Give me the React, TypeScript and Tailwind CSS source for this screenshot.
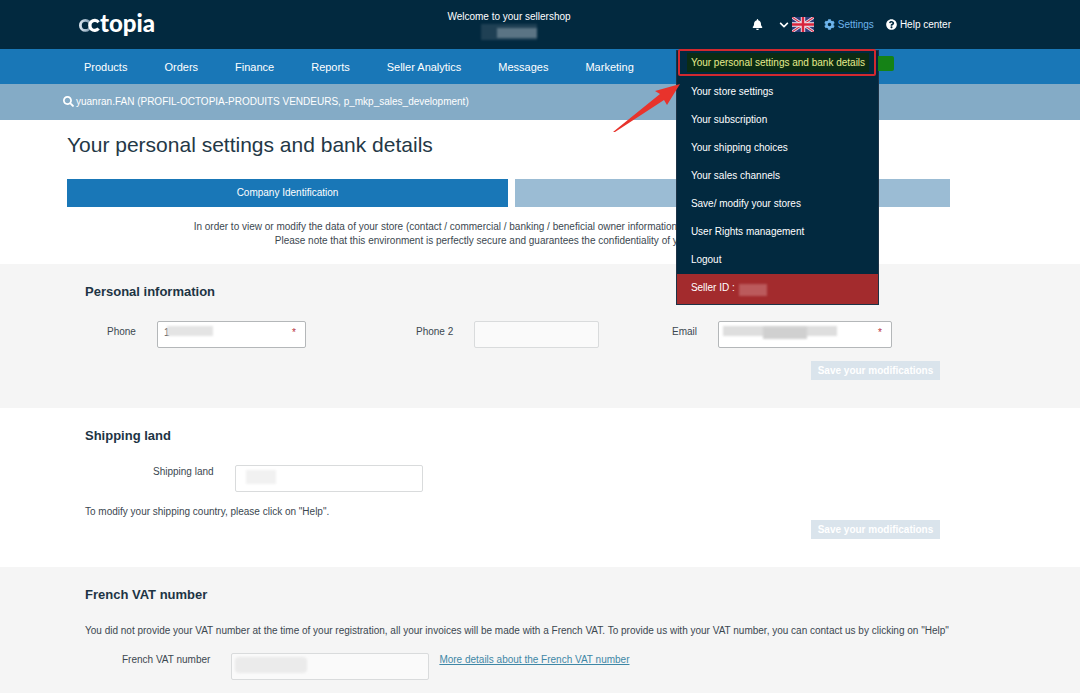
import { ReactNode } from 'react';
import { FaBell, FaChevronDown, FaCog, FaQuestionCircle, FaSearch } from 'react-icons/fa';

const NAV_ITEMS = ['Products', 'Orders', 'Finance', 'Reports', 'Seller Analytics', 'Messages', 'Marketing'];

const MENU_ITEMS = [
    'Your store settings',
    'Your subscription',
    'Your shipping choices',
    'Your sales channels',
    'Save/ modify your stores',
    'User Rights management',
    'Logout',
];

function Logo() {
    return (
        <svg width="88" height="38" viewBox="0 0 88 38" className="ml-[11px]" role="img" aria-label="octopia">
            <defs>
                <linearGradient id="logo-o" x1="0" y1="0" x2="1" y2="0">
                    <stop offset="0" stopColor="#d5e0ea" />
                    <stop offset="0.6" stopColor="#9fb6c8" />
                    <stop offset="1" stopColor="#6d889c" />
                </linearGradient>
            </defs>
            <circle cx="7.4" cy="19.4" r="5" fill="none" stroke="url(#logo-o)" strokeWidth="2.8" />
            <path d="M20.6 16.2a5 5 0 1 0 0 6.4" fill="none" stroke="#fff" strokeWidth="3.2" />
            <text x="22" y="26" fill="#fff" fontFamily="Lato, sans-serif" fontWeight="900" fontSize="24">
                topia
            </text>
        </svg>
    );
}

function UkFlag() {
    return (
        <svg width="22" height="15" viewBox="0 0 22 15" aria-hidden="true">
            <rect width="22" height="15" fill="#2f3a78" />
            <path d="M0 0L22 15M22 0L0 15" stroke="#e8e4ee" strokeWidth="2.8" />
            <path d="M0 0L22 15M22 0L0 15" stroke="#d8324a" strokeWidth="1.1" />
            <path d="M11 0V15M0 7.5H22" stroke="#f4eef2" strokeWidth="4.4" />
            <path d="M11 0V15M0 7.5H22" stroke="#d8243c" strokeWidth="2.6" />
        </svg>
    );
}

function SettingsMenu() {
    return (
        <div className="absolute top-[31px] -right-[5px] z-10 w-[203px] border border-[#1d3346] bg-[#02293f] text-[10px] text-white">
            <a
                href="#personal"
                className="relative -mt-px flex h-7 items-center px-[14px] pb-[2px] text-[#e6ec8c]"
            >
                <span className="-mx-1 bg-[#0b2c14] px-1 py-[2px] whitespace-nowrap">
                    Your personal settings and bank details
                </span>
                <span className="absolute top-[-1px] left-[1px] h-[27px] w-[198px] rounded-xs border-2 border-[#d3292f]" />
                <span className="absolute top-[6px] left-full h-[15px] w-4 rounded-r-xs bg-[#158216]" />
            </a>
            {MENU_ITEMS.map((item) => (
                <a key={item} href="#menu" className="flex h-7 items-center px-[14px]">
                    {item}
                </a>
            ))}
            <div className="flex h-[30px] items-center bg-[#a32b2d] px-[14px] pb-[2px]">
                Seller ID :
                <span className="mt-1 ml-1 h-3 w-7 bg-[#bb5a5c] blur-[1px]" />
            </div>
            <svg className="absolute top-8 -left-16" width="68" height="52" viewBox="0 0 68 52" aria-hidden="true">
                <path d="M0 49L47 11L42 8L67 1L54 22L51 17L2 49Z" fill="#e8332c" />
            </svg>
        </div>
    );
}

function Header() {
    return (
        <header className="flex h-[49px] items-center justify-between bg-[#02293f] pr-[129px] pl-[67px] text-[10px] text-white">
            <div className="flex flex-1">
                <Logo />
            </div>
            <div className="flex flex-col items-center">
                <span>Welcome to your sellershop</span>
                <span className="flex h-4 w-14 items-end justify-end bg-[#1f4054] pb-[2px] blur-[1px]">
                    <span className="h-[10px] w-10 bg-[#5b7484]" />
                </span>
            </div>
            <div className="flex flex-1 items-center justify-end">
                <button type="button" aria-label="Notifications" className="mr-4">
                    <FaBell size={11} />
                </button>
                <button type="button" aria-label="Language" className="mr-[10px] flex items-center gap-[3px]">
                    <FaChevronDown size={10} />
                    <UkFlag />
                </button>
                <div className="relative mr-3">
                    <button type="button" className="flex h-3 items-center gap-[3px] text-[#6db4ec]">
                        <FaCog size={11} />
                        Settings
                    </button>
                    <SettingsMenu />
                </div>
                <a href="#help" className="flex items-center gap-[3px]">
                    <FaQuestionCircle size={11} />
                    Help center
                </a>
            </div>
        </header>
    );
}

// Smudge that hides the stored value of a field
function Redacted({ className }: { className: string }) {
    return <span className={`absolute blur-[1px] ${className}`} />;
}

interface FieldProps {
    id: string;
    label: string;
    inputClass: string;
    labelClass?: string;
    required?: boolean;
    value?: string;
    children?: ReactNode;
}

function Field({ id, label, inputClass, labelClass = '', required, value, children }: FieldProps) {
    return (
        <div className="flex items-start gap-[21px]">
            <label htmlFor={id} className={`leading-[14px] whitespace-nowrap ${labelClass}`}>
                {label}
            </label>
            <div className="relative">
                <input
                    id={id}
                    type="text"
                    defaultValue={value}
                    className={`block h-[27px] rounded-xs border px-[6px] pb-1 ${inputClass}`}
                />
                {required && <span className="absolute top-1 right-[10px] text-[#b8323e]">*</span>}
                {children}
            </div>
        </div>
    );
}

function SaveButton() {
    return (
        <button
            type="button"
            className="mr-[10px] block h-[19px] w-[129px] self-end bg-[#dae4ec] text-[10px] font-bold whitespace-nowrap text-white"
        >
            Save your modifications
        </button>
    );
}

function SectionTitle({ children }: { children: ReactNode }) {
    return <h2 className="text-[13px] leading-4 font-bold text-[#1d3444]">{children}</h2>;
}

export default function App() {
    return (
        <div className="min-h-screen bg-white font-['Liberation_Sans',Arial,sans-serif] text-[10px] text-[#3b4750]">
            <Header />
            <nav className="flex h-[35px] items-center gap-[37px] bg-[#1977b7] pt-px pl-[84px] text-[11px] text-white">
                {NAV_ITEMS.map((item) => (
                    <a key={item} href="#nav">
                        {item}
                    </a>
                ))}
            </nav>
            <div className="flex h-9 items-center gap-[2px] bg-[#84abc6] pb-[2px] pl-[63px] text-white">
                <FaSearch size={11} />
                <span>yuanran.FAN (PROFIL-OCTOPIA-PRODUITS VENDEURS, p_mkp_sales_development)</span>
            </div>

            <main>
                <div className="h-36 pr-[130px] pl-[67px]">
                    <h1 className="pt-[11px] text-[21px] leading-7 text-[#243846]">
                        Your personal settings and bank details
                    </h1>
                    <div className="mt-5 grid grid-cols-[441fr_435fr] gap-[7px]">
                        <button type="button" className="h-7 bg-[#1977b7] pb-[2px] text-white">
                            Company Identification
                        </button>
                        <button type="button" aria-label="Next step" className="h-7 bg-[#9bbcd4]" />
                    </div>
                    <p className="mt-[13px] text-center leading-[14px]">
                        In order to view or modify the data of your store (contact / commercial / banking / beneficial
                        owner information), please fill in your details below.
                        <br />
                        Please note that this environment is perfectly secure and guarantees the confidentiality of
                        your store data.
                    </p>
                </div>

                <section className="flex h-36 flex-col bg-[#f5f5f5] pt-5 pr-[130px] pl-[85px]">
                    <SectionTitle>Personal information</SectionTitle>
                    <div className="mt-[21px] mb-[13px] ml-[22px] grid grid-cols-[309fr_256fr_220fr] pr-[58px]">
                        <Field
                            id="phone"
                            label="Phone"
                            value="1"
                            required
                            labelClass="pt-1"
                            inputClass="w-[149px] border-[#b4b7b9] bg-white"
                        >
                            <Redacted className="top-[5px] left-[10px] h-[10px] w-[46px] bg-[#e4e4e4]" />
                        </Field>
                        <Field
                            id="phone2"
                            label="Phone 2"
                            labelClass="pt-1"
                            inputClass="w-[125px] border-[#d9dbdc] bg-[#fafafa]"
                        />
                        <Field
                            id="email"
                            label="Email"
                            required
                            labelClass="pt-1"
                            inputClass="w-[174px] border-[#b4b7b9] bg-white"
                        >
                            <Redacted className="top-[5px] left-[5px] h-[10px] w-[114px] bg-[#dedede]" />
                            <Redacted className="top-[6px] left-[45px] h-3 w-[44px] bg-[#d0d0d0]" />
                        </Field>
                    </div>
                    <SaveButton />
                </section>

                <section className="flex h-[159px] flex-col pt-5 pr-[130px] pl-[85px]">
                    <SectionTitle>Shipping land</SectionTitle>
                    <div className="mt-[21px] ml-[68px]">
                        <Field
                            id="shipping-land"
                            label="Shipping land"
                            inputClass="w-[188px] border-[#d9dbdc] bg-white"
                        >
                            <Redacted className="top-[5px] left-[11px] h-[14px] w-[30px] bg-[#f1f1f1]" />
                        </Field>
                    </div>
                    <p className="mt-[13px] leading-[14px]">
                        To modify your shipping country, please click on "Help".
                    </p>
                    <div className="mt-px flex justify-end">
                        <SaveButton />
                    </div>
                </section>

                <section className="bg-[#f5f5f5] pt-5 pr-[130px] pb-[13px] pl-[85px]">
                    <SectionTitle>French VAT number</SectionTitle>
                    <p className="mt-[21px] leading-[14px] whitespace-nowrap">
                        You did not provide your VAT number at the time of your registration, all your invoices will
                        be made with a French VAT. To provide us with your VAT number, you can contact us by clicking
                        on "Help"
                    </p>
                    <div className="mt-[15px] ml-[37px] flex gap-[10px]">
                        <Field
                            id="vat"
                            label="French VAT number"
                            inputClass="w-[198px] border-[#d9dbdc] bg-[#fafafa]"
                        >
                            <Redacted className="top-[4px] left-[4px] h-4 w-[72px] rounded-sm bg-[#ebebeb]" />
                        </Field>
                        <a href="#vat-details" className="leading-[14px] text-[#3f87a6] underline">
                            More details about the French VAT number
                        </a>
                    </div>
                </section>
            </main>
        </div>
    );
}
